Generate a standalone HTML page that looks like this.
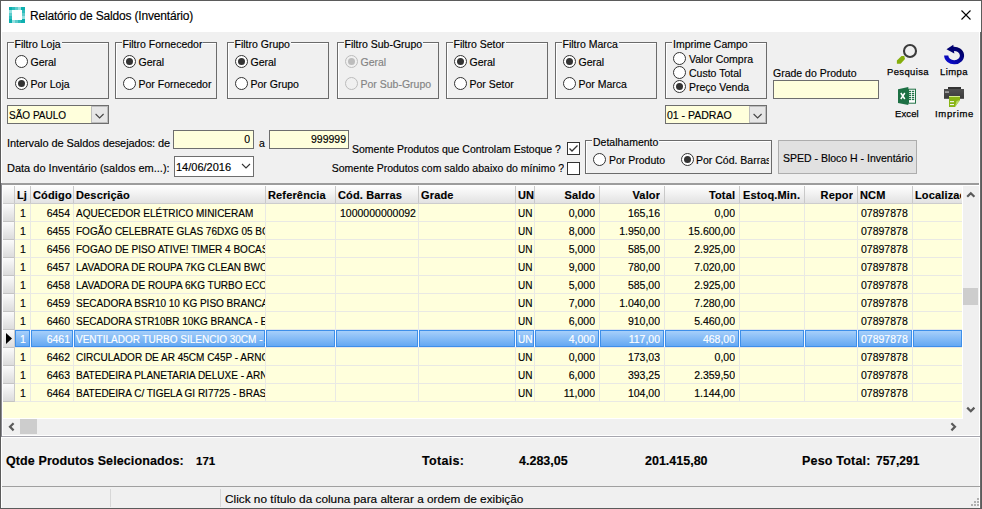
<!DOCTYPE html><html><head><meta charset="utf-8"><style>
html,body{margin:0;padding:0;}
body{width:982px;height:509px;position:relative;overflow:hidden;background:#f0f0f0;font-family:"Liberation Sans", sans-serif;}
.t{position:absolute;white-space:nowrap;line-height:12px;font-family:"Liberation Sans", sans-serif;-webkit-text-stroke:0.15px currentColor;}
</style></head><body>
<div style="position:absolute;left:0px;top:0px;width:982px;height:32px;background:#fff;"></div>
<svg style="position:absolute;left:9px;top:7px" width="16" height="16" viewBox="0 0 16 16" shape-rendering="crispEdges">
<rect x="0" y="0" width="16" height="16" fill="#0eafaf"/>
<rect x="3" y="3" width="10" height="10" fill="#fff"/>
<rect x="3" y="0" width="3" height="3" fill="#2ebcbc"/><rect x="6" y="0" width="3" height="3" fill="#5ccccc"/><rect x="9" y="0" width="3" height="3" fill="#93e0e0"/>
<rect x="13" y="3" width="3" height="3" fill="#2ebcbc"/><rect x="13" y="6" width="3" height="3" fill="#5ccccc"/><rect x="13" y="9" width="3" height="3" fill="#93e0e0"/>
<rect x="9" y="13" width="3" height="3" fill="#2ebcbc"/><rect x="6" y="13" width="3" height="3" fill="#5ccccc"/><rect x="3" y="13" width="3" height="3" fill="#93e0e0"/>
<rect x="0" y="9" width="3" height="3" fill="#2ebcbc"/><rect x="0" y="6" width="3" height="3" fill="#5ccccc"/><rect x="0" y="3" width="3" height="3" fill="#93e0e0"/>
</svg>
<div class="t" style="left:30px;top:8px;font-size:12px;font-weight:normal;color:#000;line-height:16px;letter-spacing:-0.18px">Relatório de Saldos (Inventário)</div>
<svg style="position:absolute;left:960px;top:9px" width="12" height="12"><path d="M1.5 1.5 L10.5 10.5 M10.5 1.5 L1.5 10.5" stroke="#000" stroke-width="1.1"/></svg>
<div style="position:absolute;left:7px;top:42px;width:102px;height:57px;box-sizing:border-box;border:1px solid #6b6b6b;box-shadow:inset 1px 1px 0 #fff;"></div>
<div class="t" style="left:13.5px;top:38px;padding:0 1px;background:#f0f0f0;font-size:10.5px;color:#000">Filtro Loja</div>
<div style="position:absolute;left:15px;top:55px;width:13px;height:13px;box-sizing:border-box;border:1px solid #333;border-radius:50%;background:#fff;"></div>
<div class="t" style="left:30.5px;top:54px;font-size:10.5px;font-weight:normal;color:#000;line-height:16px;">Geral</div>
<div style="position:absolute;left:15px;top:77px;width:13px;height:13px;box-sizing:border-box;border:1px solid #333;border-radius:50%;background:#fff;"></div>
<div style="position:absolute;left:18px;top:80px;width:7px;height:7px;border-radius:50%;background:#333;"></div>
<div class="t" style="left:30.5px;top:76px;font-size:10.5px;font-weight:normal;color:#000;line-height:16px;">Por Loja</div>
<div style="position:absolute;left:115px;top:42px;width:102px;height:57px;box-sizing:border-box;border:1px solid #6b6b6b;box-shadow:inset 1px 1px 0 #fff;"></div>
<div class="t" style="left:121.5px;top:38px;padding:0 1px;background:#f0f0f0;font-size:10.5px;color:#000">Filtro Fornecedor</div>
<div style="position:absolute;left:123px;top:55px;width:13px;height:13px;box-sizing:border-box;border:1px solid #333;border-radius:50%;background:#fff;"></div>
<div style="position:absolute;left:126px;top:58px;width:7px;height:7px;border-radius:50%;background:#333;"></div>
<div class="t" style="left:138.5px;top:54px;font-size:10.5px;font-weight:normal;color:#000;line-height:16px;">Geral</div>
<div style="position:absolute;left:123px;top:77px;width:13px;height:13px;box-sizing:border-box;border:1px solid #333;border-radius:50%;background:#fff;"></div>
<div class="t" style="left:138.5px;top:76px;font-size:10.5px;font-weight:normal;color:#000;line-height:16px;">Por Fornecedor</div>
<div style="position:absolute;left:227px;top:42px;width:102px;height:57px;box-sizing:border-box;border:1px solid #6b6b6b;box-shadow:inset 1px 1px 0 #fff;"></div>
<div class="t" style="left:233.5px;top:38px;padding:0 1px;background:#f0f0f0;font-size:10.5px;color:#000">Filtro Grupo</div>
<div style="position:absolute;left:235px;top:55px;width:13px;height:13px;box-sizing:border-box;border:1px solid #333;border-radius:50%;background:#fff;"></div>
<div style="position:absolute;left:238px;top:58px;width:7px;height:7px;border-radius:50%;background:#333;"></div>
<div class="t" style="left:250.5px;top:54px;font-size:10.5px;font-weight:normal;color:#000;line-height:16px;">Geral</div>
<div style="position:absolute;left:235px;top:77px;width:13px;height:13px;box-sizing:border-box;border:1px solid #333;border-radius:50%;background:#fff;"></div>
<div class="t" style="left:250.5px;top:76px;font-size:10.5px;font-weight:normal;color:#000;line-height:16px;">Por Grupo</div>
<div style="position:absolute;left:337px;top:42px;width:102px;height:57px;box-sizing:border-box;border:1px solid #6b6b6b;box-shadow:inset 1px 1px 0 #fff;"></div>
<div class="t" style="left:343.5px;top:38px;padding:0 1px;background:#f0f0f0;font-size:10.5px;color:#000">Filtro Sub-Grupo</div>
<div style="position:absolute;left:345px;top:55px;width:13px;height:13px;box-sizing:border-box;border:1px solid #bcbcbc;border-radius:50%;background:#f0f0f0;"></div>
<div style="position:absolute;left:348px;top:58px;width:7px;height:7px;border-radius:50%;background:#bcbcbc;"></div>
<div class="t" style="left:360.5px;top:54px;font-size:10.5px;font-weight:normal;color:#838383;line-height:16px;">Geral</div>
<div style="position:absolute;left:345px;top:77px;width:13px;height:13px;box-sizing:border-box;border:1px solid #bcbcbc;border-radius:50%;background:#f0f0f0;"></div>
<div class="t" style="left:360.5px;top:76px;font-size:10.5px;font-weight:normal;color:#838383;line-height:16px;">Por Sub-Grupo</div>
<div style="position:absolute;left:446px;top:42px;width:102px;height:57px;box-sizing:border-box;border:1px solid #6b6b6b;box-shadow:inset 1px 1px 0 #fff;"></div>
<div class="t" style="left:452.5px;top:38px;padding:0 1px;background:#f0f0f0;font-size:10.5px;color:#000">Filtro Setor</div>
<div style="position:absolute;left:454px;top:55px;width:13px;height:13px;box-sizing:border-box;border:1px solid #333;border-radius:50%;background:#fff;"></div>
<div style="position:absolute;left:457px;top:58px;width:7px;height:7px;border-radius:50%;background:#333;"></div>
<div class="t" style="left:469.5px;top:54px;font-size:10.5px;font-weight:normal;color:#000;line-height:16px;">Geral</div>
<div style="position:absolute;left:454px;top:77px;width:13px;height:13px;box-sizing:border-box;border:1px solid #333;border-radius:50%;background:#fff;"></div>
<div class="t" style="left:469.5px;top:76px;font-size:10.5px;font-weight:normal;color:#000;line-height:16px;">Por Setor</div>
<div style="position:absolute;left:555px;top:42px;width:102px;height:57px;box-sizing:border-box;border:1px solid #6b6b6b;box-shadow:inset 1px 1px 0 #fff;"></div>
<div class="t" style="left:561.5px;top:38px;padding:0 1px;background:#f0f0f0;font-size:10.5px;color:#000">Filtro Marca</div>
<div style="position:absolute;left:563px;top:55px;width:13px;height:13px;box-sizing:border-box;border:1px solid #333;border-radius:50%;background:#fff;"></div>
<div style="position:absolute;left:566px;top:58px;width:7px;height:7px;border-radius:50%;background:#333;"></div>
<div class="t" style="left:578.5px;top:54px;font-size:10.5px;font-weight:normal;color:#000;line-height:16px;">Geral</div>
<div style="position:absolute;left:563px;top:77px;width:13px;height:13px;box-sizing:border-box;border:1px solid #333;border-radius:50%;background:#fff;"></div>
<div class="t" style="left:578.5px;top:76px;font-size:10.5px;font-weight:normal;color:#000;line-height:16px;">Por Marca</div>
<div style="position:absolute;left:665px;top:42px;width:102px;height:57px;box-sizing:border-box;border:1px solid #6b6b6b;box-shadow:inset 1px 1px 0 #fff;"></div>
<div class="t" style="left:672px;top:38px;padding:0 1px;background:#f0f0f0;font-size:10.5px;color:#000">Imprime Campo</div>
<div style="position:absolute;left:673px;top:52px;width:13px;height:13px;box-sizing:border-box;border:1px solid #333;border-radius:50%;background:#fff;"></div>
<div class="t" style="left:689px;top:51px;font-size:10.5px;font-weight:normal;color:#000;line-height:16px;">Valor Compra</div>
<div style="position:absolute;left:673px;top:66px;width:13px;height:13px;box-sizing:border-box;border:1px solid #333;border-radius:50%;background:#fff;"></div>
<div class="t" style="left:689px;top:65px;font-size:10.5px;font-weight:normal;color:#000;line-height:16px;">Custo Total</div>
<div style="position:absolute;left:673px;top:80px;width:13px;height:13px;box-sizing:border-box;border:1px solid #333;border-radius:50%;background:#fff;"></div>
<div style="position:absolute;left:676px;top:83px;width:7px;height:7px;border-radius:50%;background:#333;"></div>
<div class="t" style="left:689px;top:79px;font-size:10.5px;font-weight:normal;color:#000;line-height:16px;">Preço Venda</div>
<div style="position:absolute;left:7px;top:105px;width:102px;height:19px;box-sizing:border-box;border:1px solid #6e6e6e;background:#ffffdc;"></div>
<div style="position:absolute;left:91px;top:106px;width:17px;height:17px;box-sizing:border-box;border:1px solid #bdbdbd;background:#e6e6e6;"></div>
<svg style="position:absolute;left:94px;top:113px" width="11" height="7"><path d="M1.6 1 L5.6 5 L9.6 1" fill="none" stroke="#444" stroke-width="1.1"/></svg>
<div class="t" style="left:9px;top:108px;font-size:10px;font-weight:normal;color:#000;line-height:16px;">SÃO PAULO</div>
<div style="position:absolute;left:665px;top:105px;width:102px;height:19px;box-sizing:border-box;border:1px solid #6e6e6e;background:#ffffdc;"></div>
<div style="position:absolute;left:749px;top:106px;width:17px;height:17px;box-sizing:border-box;border:1px solid #bdbdbd;background:#e6e6e6;"></div>
<svg style="position:absolute;left:752px;top:113px" width="11" height="7"><path d="M1.6 1 L5.6 5 L9.6 1" fill="none" stroke="#444" stroke-width="1.1"/></svg>
<div class="t" style="left:667px;top:107px;font-size:10.5px;font-weight:normal;color:#000;line-height:16px;">01 - PADRAO</div>
<div class="t" style="left:773px;top:65px;font-size:10.5px;font-weight:normal;color:#000;line-height:16px;">Grade do Produto</div>
<div style="position:absolute;left:773px;top:80px;width:106px;height:19px;box-sizing:border-box;border:1px solid #6e6e6e;background:#ffffdc;"></div>
<svg style="position:absolute;left:894px;top:42px" width="26" height="24" viewBox="0 0 26 24">
<circle cx="16" cy="9" r="6" fill="none" stroke="#3a3a3a" stroke-width="2.1"/>
<path d="M2.9 18.4 L7.5 14.1 L10.3 14.1 L11 16.9 L6.7 21.8 L2.9 21.8 Z" fill="#86ae0c"/>
</svg>
<div class="t" style="left:887px;top:64px;font-size:9.5px;font-weight:normal;color:#000;line-height:16px;letter-spacing:0.36px;-webkit-text-stroke:0.25px #000">Pesquisa</div>
<svg style="position:absolute;left:942px;top:43px" width="24" height="22" viewBox="0 0 24 22">
<defs><linearGradient id="lg1" x1="1" y1="0" x2="0" y2="1"><stop offset="0" stop-color="#00005a"/><stop offset="1" stop-color="#0c0cd4"/></linearGradient></defs>
<path d="M4.2 12.6 A 7.9 6.7 0 1 0 11.0 5.9" fill="none" stroke="url(#lg1)" stroke-width="4.2"/>
<path d="M4.5 6.3 L11.3 1.8 L12.3 10.4 Z" fill="#000070"/>
</svg>
<div class="t" style="left:940px;top:64px;font-size:9.5px;font-weight:normal;color:#000;line-height:16px;letter-spacing:0.42px;-webkit-text-stroke:0.25px #000">Limpa</div>
<svg style="position:absolute;left:897px;top:87px" width="20" height="18" viewBox="0 0 20 18">
<rect x="11.5" y="2.2" width="7" height="14" fill="#fff" stroke="#217346" stroke-width="1"/>
<g fill="#217346"><rect x="12" y="3.8" width="2.2" height="1.3"/><rect x="15" y="3.8" width="2.2" height="1.3"/>
<rect x="12" y="5.9" width="2.2" height="1.3"/><rect x="15" y="5.9" width="2.2" height="1.3"/>
<rect x="12" y="7.8" width="2.2" height="1.3"/><rect x="15" y="7.8" width="2.2" height="1.3"/>
<rect x="12" y="9.9" width="2.2" height="1.3"/><rect x="15" y="9.9" width="2.2" height="1.3"/>
<rect x="12" y="11.8" width="2.2" height="1.3"/><rect x="15" y="11.8" width="2.2" height="1.3"/></g>
<path d="M1 2.2 L11.3 0 L11.3 18 L1 15.9 Z" fill="#1d7044"/>
<path d="M3.8 6 L7.8 12 M7.8 6 L3.8 12" stroke="#fff" stroke-width="1.5"/>
</svg>
<div class="t" style="left:895px;top:106px;font-size:9.5px;font-weight:normal;color:#000;line-height:16px;letter-spacing:0.1px;-webkit-text-stroke:0.25px #000">Excel</div>
<svg style="position:absolute;left:943px;top:86px" width="22" height="22" viewBox="0 0 22 22">
<rect x="5" y="1" width="13" height="2.2" fill="#333"/>
<defs><linearGradient id="lg2" x1="0" y1="0" x2="0" y2="1"><stop offset="0" stop-color="#505050"/><stop offset="1" stop-color="#3a3a3a"/></linearGradient></defs>
<rect x="1" y="3" width="20" height="9.8" fill="url(#lg2)"/>
<rect x="2" y="5.2" width="4" height="1.8" fill="#9c9c9c"/>
<path d="M6 10 L17 10 L17 14 L12 21 L6 21 Z" fill="#88b414"/>
<rect x="6" y="10" width="11" height="1" fill="#d6ee8e"/>
<path d="M17 14 L13.5 15 L12 21 Z" fill="#b8d862"/>
<rect x="7" y="15.1" width="4" height="1.1" fill="#f4f4f4"/>
<rect x="7" y="18" width="4" height="1.1" fill="#f4f4f4"/>
</svg>
<div class="t" style="left:935px;top:106px;font-size:9.5px;font-weight:normal;color:#000;line-height:16px;letter-spacing:0.67px;-webkit-text-stroke:0.25px #000">Imprime</div>
<div class="t" style="left:7px;top:135px;font-size:11px;font-weight:normal;color:#000;line-height:16px;letter-spacing:-0.08px">Intervalo de Saldos desejados: de</div>
<div style="position:absolute;left:173px;top:130px;width:81px;height:19px;box-sizing:border-box;border:1px solid #6e6e6e;background:#ffffdc;"></div>
<div class="t" style="left:190px;width:60px;text-align:right;overflow:hidden;top:131px;font-size:10.5px;font-weight:normal;color:#000;line-height:16px;">0</div>
<div class="t" style="left:259px;top:135px;font-size:10.5px;font-weight:normal;color:#000;line-height:16px;">a</div>
<div style="position:absolute;left:269px;top:130px;width:80px;height:19px;box-sizing:border-box;border:1px solid #6e6e6e;background:#ffffdc;"></div>
<div class="t" style="left:276px;width:70px;text-align:right;overflow:hidden;top:131px;font-size:10.5px;font-weight:normal;color:#000;line-height:16px;">999999</div>
<div class="t" style="left:7px;top:160px;font-size:11px;font-weight:normal;color:#000;line-height:16px;">Data do Inventário (saldos em...):</div>
<div style="position:absolute;left:174px;top:156px;width:80px;height:21px;box-sizing:border-box;border:1px solid #6e6e6e;background:#fff;"></div>
<div class="t" style="left:176px;top:159px;font-size:11px;font-weight:normal;color:#000;line-height:16px;">14/06/2016</div>
<svg style="position:absolute;left:241px;top:163px" width="10" height="7"><path d="M1 1 L5 5 L9 1" fill="none" stroke="#333" stroke-width="1.1"/></svg>
<div class="t" style="left:352px;top:141px;font-size:10.5px;font-weight:normal;color:#000;line-height:16px;">Somente Produtos que Controlam Estoque ?</div>
<div style="position:absolute;left:567px;top:142px;width:13px;height:13px;box-sizing:border-box;border:1px solid #333;background:#fff;"></div>
<svg style="position:absolute;left:567px;top:142px" width="13" height="13"><path d="M2.5 6.5 L5 9 L10.5 3.5" fill="none" stroke="#333" stroke-width="1.3"/></svg>
<div class="t" style="left:324px;width:240px;text-align:right;overflow:hidden;top:160px;font-size:10.5px;font-weight:normal;color:#000;line-height:16px;">Somente Produtos com saldo abaixo do mínimo ?</div>
<div style="position:absolute;left:567px;top:162px;width:13px;height:13px;box-sizing:border-box;border:1px solid #333;background:#fff;"></div>
<div style="position:absolute;left:585px;top:140px;width:187px;height:34px;box-sizing:border-box;border:1px solid #6b6b6b;box-shadow:inset 1px 1px 0 #fff;"></div>
<div class="t" style="left:592px;top:136px;padding:0 1px;background:#f0f0f0;font-size:10.5px;color:#000">Detalhamento</div>
<div style="position:absolute;left:593px;top:153px;width:13px;height:13px;box-sizing:border-box;border:1px solid #333;border-radius:50%;background:#fff;"></div>
<div class="t" style="left:609px;top:152px;font-size:10.5px;font-weight:normal;color:#000;line-height:16px;">Por Produto</div>
<div style="position:absolute;left:681px;top:153px;width:13px;height:13px;box-sizing:border-box;border:1px solid #333;border-radius:50%;background:#fff;"></div>
<div style="position:absolute;left:684px;top:156px;width:7px;height:7px;border-radius:50%;background:#333;"></div>
<div class="t" style="left:696px;width:73px;overflow:hidden;top:152px;font-size:10.5px;font-weight:normal;color:#000;line-height:16px;">Por Cód. Barras</div>
<div style="position:absolute;left:778px;top:140px;width:139px;height:34px;box-sizing:border-box;border:1px solid #adadad;background:#e1e1e1;"></div>
<div class="t" style="left:783px;top:150px;font-size:10.5px;font-weight:normal;color:#000;line-height:16px;">SPED - Bloco H - Inventário</div>
<div style="position:absolute;left:1px;top:183px;width:980px;height:1px;background:#a0a0a0;"></div>
<div style="position:absolute;left:2px;top:183px;width:978px;height:2px;background:#9c9c9c;"></div>
<div style="position:absolute;left:2px;top:185px;width:960px;height:233px;background:#ffffdc;"></div>
<div style="position:absolute;left:2px;top:185px;width:960px;height:18px;background:linear-gradient(#ffffff 0%,#f4f4f4 40%,#e2e2e2 100%);"></div>
<div style="position:absolute;left:2px;top:203px;width:960px;height:1px;background:#cdcdcd;"></div>
<div style="position:absolute;left:14px;top:186px;width:1px;height:17px;background:#c9c9c9;"></div>
<div style="position:absolute;left:30px;top:186px;width:1px;height:17px;background:#c9c9c9;"></div>
<div style="position:absolute;left:73px;top:186px;width:1px;height:17px;background:#c9c9c9;"></div>
<div style="position:absolute;left:265px;top:186px;width:1px;height:17px;background:#c9c9c9;"></div>
<div style="position:absolute;left:335px;top:186px;width:1px;height:17px;background:#c9c9c9;"></div>
<div style="position:absolute;left:418px;top:186px;width:1px;height:17px;background:#c9c9c9;"></div>
<div style="position:absolute;left:515px;top:186px;width:1px;height:17px;background:#c9c9c9;"></div>
<div style="position:absolute;left:534px;top:186px;width:1px;height:17px;background:#c9c9c9;"></div>
<div style="position:absolute;left:599px;top:186px;width:1px;height:17px;background:#c9c9c9;"></div>
<div style="position:absolute;left:664px;top:186px;width:1px;height:17px;background:#c9c9c9;"></div>
<div style="position:absolute;left:739px;top:186px;width:1px;height:17px;background:#c9c9c9;"></div>
<div style="position:absolute;left:804px;top:186px;width:1px;height:17px;background:#c9c9c9;"></div>
<div style="position:absolute;left:857px;top:186px;width:1px;height:17px;background:#c9c9c9;"></div>
<div style="position:absolute;left:912px;top:186px;width:1px;height:17px;background:#c9c9c9;"></div>
<div class="t" style="left:17px;width:13px;overflow:hidden;top:187px;font-size:11px;font-weight:bold;color:#000;line-height:16px;letter-spacing:0.15px">Lj</div>
<div class="t" style="left:33px;width:40px;overflow:hidden;top:187px;font-size:11px;font-weight:bold;color:#000;line-height:16px;letter-spacing:0.15px">Código</div>
<div class="t" style="left:76px;width:189px;overflow:hidden;top:187px;font-size:11px;font-weight:bold;color:#000;line-height:16px;letter-spacing:0.15px">Descrição</div>
<div class="t" style="left:268px;width:67px;overflow:hidden;top:187px;font-size:11px;font-weight:bold;color:#000;line-height:16px;letter-spacing:0.15px">Referência</div>
<div class="t" style="left:338px;width:80px;overflow:hidden;top:187px;font-size:11px;font-weight:bold;color:#000;line-height:16px;letter-spacing:0.15px">Cód. Barras</div>
<div class="t" style="left:421px;width:94px;overflow:hidden;top:187px;font-size:11px;font-weight:bold;color:#000;line-height:16px;letter-spacing:0.15px">Grade</div>
<div class="t" style="left:518px;width:16px;overflow:hidden;top:187px;font-size:11px;font-weight:bold;color:#000;line-height:16px;letter-spacing:0.15px">UN</div>
<div class="t" style="left:743px;width:61px;overflow:hidden;top:187px;font-size:11px;font-weight:bold;color:#000;line-height:16px;letter-spacing:0.15px">Estoq.Min.</div>
<div class="t" style="left:860px;width:52px;overflow:hidden;top:187px;font-size:11px;font-weight:bold;color:#000;line-height:16px;letter-spacing:0.15px">NCM</div>
<div class="t" style="left:915px;width:46px;overflow:hidden;top:187px;font-size:11px;font-weight:bold;color:#000;line-height:16px;letter-spacing:0.15px">Localização</div>
<div class="t" style="left:535.15px;width:60px;text-align:right;overflow:hidden;top:187px;font-size:11px;font-weight:bold;color:#000;line-height:16px;letter-spacing:0.15px">Saldo</div>
<div class="t" style="left:600.15px;width:60px;text-align:right;overflow:hidden;top:187px;font-size:11px;font-weight:bold;color:#000;line-height:16px;letter-spacing:0.15px">Valor</div>
<div class="t" style="left:675.15px;width:60px;text-align:right;overflow:hidden;top:187px;font-size:11px;font-weight:bold;color:#000;line-height:16px;letter-spacing:0.15px">Total</div>
<div class="t" style="left:793.15px;width:60px;text-align:right;overflow:hidden;top:187px;font-size:11px;font-weight:bold;color:#000;line-height:16px;letter-spacing:0.15px">Repor</div>
<div style="position:absolute;left:3px;top:204px;width:11px;height:17px;background:linear-gradient(#fbfbfb,#dcdcdc);"></div>
<div style="position:absolute;left:3px;top:221px;width:11px;height:1px;background:#c4c4c4;"></div>
<div style="position:absolute;left:15px;top:221px;width:947px;height:1px;background:#e9e9e4;"></div>
<div style="position:absolute;left:30px;top:204px;width:1px;height:17px;background:#e9e9e4;"></div>
<div style="position:absolute;left:73px;top:204px;width:1px;height:17px;background:#e9e9e4;"></div>
<div style="position:absolute;left:265px;top:204px;width:1px;height:17px;background:#e9e9e4;"></div>
<div style="position:absolute;left:335px;top:204px;width:1px;height:17px;background:#e9e9e4;"></div>
<div style="position:absolute;left:418px;top:204px;width:1px;height:17px;background:#e9e9e4;"></div>
<div style="position:absolute;left:515px;top:204px;width:1px;height:17px;background:#e9e9e4;"></div>
<div style="position:absolute;left:534px;top:204px;width:1px;height:17px;background:#e9e9e4;"></div>
<div style="position:absolute;left:599px;top:204px;width:1px;height:17px;background:#e9e9e4;"></div>
<div style="position:absolute;left:664px;top:204px;width:1px;height:17px;background:#e9e9e4;"></div>
<div style="position:absolute;left:739px;top:204px;width:1px;height:17px;background:#e9e9e4;"></div>
<div style="position:absolute;left:804px;top:204px;width:1px;height:17px;background:#e9e9e4;"></div>
<div style="position:absolute;left:857px;top:204px;width:1px;height:17px;background:#e9e9e4;"></div>
<div style="position:absolute;left:912px;top:204px;width:1px;height:17px;background:#e9e9e4;"></div>
<div style="position:absolute;left:14px;top:204px;width:1px;height:18px;background:#c9c9c9;"></div>
<div class="t" style="left:20px;top:205px;font-size:10.5px;font-weight:normal;color:#000;line-height:16px;">1</div>
<div class="t" style="left:30px;width:40px;text-align:right;overflow:hidden;top:205px;font-size:10.5px;font-weight:normal;color:#000;line-height:16px;">6454</div>
<div class="t" style="left:76px;width:189px;overflow:hidden;top:206px;font-size:10px;font-weight:normal;color:#000;line-height:16px;">AQUECEDOR ELÉTRICO MINICERAM</div>
<div class="t" style="left:340px;width:78px;overflow:hidden;top:205px;font-size:10.5px;font-weight:normal;color:#000;line-height:16px;">1000000000092</div>
<div class="t" style="left:518px;top:206px;font-size:10px;font-weight:normal;color:#000;line-height:16px;">UN</div>
<div class="t" style="left:535px;width:60px;text-align:right;overflow:hidden;top:205px;font-size:10.5px;font-weight:normal;color:#000;line-height:16px;">0,000</div>
<div class="t" style="left:600px;width:60px;text-align:right;overflow:hidden;top:205px;font-size:10.5px;font-weight:normal;color:#000;line-height:16px;">165,16</div>
<div class="t" style="left:665px;width:70px;text-align:right;overflow:hidden;top:205px;font-size:10.5px;font-weight:normal;color:#000;line-height:16px;">0,00</div>
<div class="t" style="left:861px;top:205px;font-size:10.5px;font-weight:normal;color:#000;line-height:16px;">07897878</div>
<div style="position:absolute;left:3px;top:222px;width:11px;height:17px;background:linear-gradient(#fbfbfb,#dcdcdc);"></div>
<div style="position:absolute;left:3px;top:239px;width:11px;height:1px;background:#c4c4c4;"></div>
<div style="position:absolute;left:15px;top:239px;width:947px;height:1px;background:#e9e9e4;"></div>
<div style="position:absolute;left:30px;top:222px;width:1px;height:17px;background:#e9e9e4;"></div>
<div style="position:absolute;left:73px;top:222px;width:1px;height:17px;background:#e9e9e4;"></div>
<div style="position:absolute;left:265px;top:222px;width:1px;height:17px;background:#e9e9e4;"></div>
<div style="position:absolute;left:335px;top:222px;width:1px;height:17px;background:#e9e9e4;"></div>
<div style="position:absolute;left:418px;top:222px;width:1px;height:17px;background:#e9e9e4;"></div>
<div style="position:absolute;left:515px;top:222px;width:1px;height:17px;background:#e9e9e4;"></div>
<div style="position:absolute;left:534px;top:222px;width:1px;height:17px;background:#e9e9e4;"></div>
<div style="position:absolute;left:599px;top:222px;width:1px;height:17px;background:#e9e9e4;"></div>
<div style="position:absolute;left:664px;top:222px;width:1px;height:17px;background:#e9e9e4;"></div>
<div style="position:absolute;left:739px;top:222px;width:1px;height:17px;background:#e9e9e4;"></div>
<div style="position:absolute;left:804px;top:222px;width:1px;height:17px;background:#e9e9e4;"></div>
<div style="position:absolute;left:857px;top:222px;width:1px;height:17px;background:#e9e9e4;"></div>
<div style="position:absolute;left:912px;top:222px;width:1px;height:17px;background:#e9e9e4;"></div>
<div style="position:absolute;left:14px;top:222px;width:1px;height:18px;background:#c9c9c9;"></div>
<div class="t" style="left:20px;top:223px;font-size:10.5px;font-weight:normal;color:#000;line-height:16px;">1</div>
<div class="t" style="left:30px;width:40px;text-align:right;overflow:hidden;top:223px;font-size:10.5px;font-weight:normal;color:#000;line-height:16px;">6455</div>
<div class="t" style="left:76px;width:189px;overflow:hidden;top:224px;font-size:10px;font-weight:normal;color:#000;line-height:16px;">FOGÃO CELEBRATE GLAS 76DXG 05 BCA</div>
<div class="t" style="left:340px;width:78px;overflow:hidden;top:223px;font-size:10.5px;font-weight:normal;color:#000;line-height:16px;"></div>
<div class="t" style="left:518px;top:224px;font-size:10px;font-weight:normal;color:#000;line-height:16px;">UN</div>
<div class="t" style="left:535px;width:60px;text-align:right;overflow:hidden;top:223px;font-size:10.5px;font-weight:normal;color:#000;line-height:16px;">8,000</div>
<div class="t" style="left:600px;width:60px;text-align:right;overflow:hidden;top:223px;font-size:10.5px;font-weight:normal;color:#000;line-height:16px;">1.950,00</div>
<div class="t" style="left:665px;width:70px;text-align:right;overflow:hidden;top:223px;font-size:10.5px;font-weight:normal;color:#000;line-height:16px;">15.600,00</div>
<div class="t" style="left:861px;top:223px;font-size:10.5px;font-weight:normal;color:#000;line-height:16px;">07897878</div>
<div style="position:absolute;left:3px;top:240px;width:11px;height:17px;background:linear-gradient(#fbfbfb,#dcdcdc);"></div>
<div style="position:absolute;left:3px;top:257px;width:11px;height:1px;background:#c4c4c4;"></div>
<div style="position:absolute;left:15px;top:257px;width:947px;height:1px;background:#e9e9e4;"></div>
<div style="position:absolute;left:30px;top:240px;width:1px;height:17px;background:#e9e9e4;"></div>
<div style="position:absolute;left:73px;top:240px;width:1px;height:17px;background:#e9e9e4;"></div>
<div style="position:absolute;left:265px;top:240px;width:1px;height:17px;background:#e9e9e4;"></div>
<div style="position:absolute;left:335px;top:240px;width:1px;height:17px;background:#e9e9e4;"></div>
<div style="position:absolute;left:418px;top:240px;width:1px;height:17px;background:#e9e9e4;"></div>
<div style="position:absolute;left:515px;top:240px;width:1px;height:17px;background:#e9e9e4;"></div>
<div style="position:absolute;left:534px;top:240px;width:1px;height:17px;background:#e9e9e4;"></div>
<div style="position:absolute;left:599px;top:240px;width:1px;height:17px;background:#e9e9e4;"></div>
<div style="position:absolute;left:664px;top:240px;width:1px;height:17px;background:#e9e9e4;"></div>
<div style="position:absolute;left:739px;top:240px;width:1px;height:17px;background:#e9e9e4;"></div>
<div style="position:absolute;left:804px;top:240px;width:1px;height:17px;background:#e9e9e4;"></div>
<div style="position:absolute;left:857px;top:240px;width:1px;height:17px;background:#e9e9e4;"></div>
<div style="position:absolute;left:912px;top:240px;width:1px;height:17px;background:#e9e9e4;"></div>
<div style="position:absolute;left:14px;top:240px;width:1px;height:18px;background:#c9c9c9;"></div>
<div class="t" style="left:20px;top:241px;font-size:10.5px;font-weight:normal;color:#000;line-height:16px;">1</div>
<div class="t" style="left:30px;width:40px;text-align:right;overflow:hidden;top:241px;font-size:10.5px;font-weight:normal;color:#000;line-height:16px;">6456</div>
<div class="t" style="left:76px;width:189px;overflow:hidden;top:242px;font-size:10px;font-weight:normal;color:#000;line-height:16px;">FOGAO DE PISO ATIVE! TIMER 4 BOCAS</div>
<div class="t" style="left:340px;width:78px;overflow:hidden;top:241px;font-size:10.5px;font-weight:normal;color:#000;line-height:16px;"></div>
<div class="t" style="left:518px;top:242px;font-size:10px;font-weight:normal;color:#000;line-height:16px;">UN</div>
<div class="t" style="left:535px;width:60px;text-align:right;overflow:hidden;top:241px;font-size:10.5px;font-weight:normal;color:#000;line-height:16px;">5,000</div>
<div class="t" style="left:600px;width:60px;text-align:right;overflow:hidden;top:241px;font-size:10.5px;font-weight:normal;color:#000;line-height:16px;">585,00</div>
<div class="t" style="left:665px;width:70px;text-align:right;overflow:hidden;top:241px;font-size:10.5px;font-weight:normal;color:#000;line-height:16px;">2.925,00</div>
<div class="t" style="left:861px;top:241px;font-size:10.5px;font-weight:normal;color:#000;line-height:16px;">07897878</div>
<div style="position:absolute;left:3px;top:258px;width:11px;height:17px;background:linear-gradient(#fbfbfb,#dcdcdc);"></div>
<div style="position:absolute;left:3px;top:275px;width:11px;height:1px;background:#c4c4c4;"></div>
<div style="position:absolute;left:15px;top:275px;width:947px;height:1px;background:#e9e9e4;"></div>
<div style="position:absolute;left:30px;top:258px;width:1px;height:17px;background:#e9e9e4;"></div>
<div style="position:absolute;left:73px;top:258px;width:1px;height:17px;background:#e9e9e4;"></div>
<div style="position:absolute;left:265px;top:258px;width:1px;height:17px;background:#e9e9e4;"></div>
<div style="position:absolute;left:335px;top:258px;width:1px;height:17px;background:#e9e9e4;"></div>
<div style="position:absolute;left:418px;top:258px;width:1px;height:17px;background:#e9e9e4;"></div>
<div style="position:absolute;left:515px;top:258px;width:1px;height:17px;background:#e9e9e4;"></div>
<div style="position:absolute;left:534px;top:258px;width:1px;height:17px;background:#e9e9e4;"></div>
<div style="position:absolute;left:599px;top:258px;width:1px;height:17px;background:#e9e9e4;"></div>
<div style="position:absolute;left:664px;top:258px;width:1px;height:17px;background:#e9e9e4;"></div>
<div style="position:absolute;left:739px;top:258px;width:1px;height:17px;background:#e9e9e4;"></div>
<div style="position:absolute;left:804px;top:258px;width:1px;height:17px;background:#e9e9e4;"></div>
<div style="position:absolute;left:857px;top:258px;width:1px;height:17px;background:#e9e9e4;"></div>
<div style="position:absolute;left:912px;top:258px;width:1px;height:17px;background:#e9e9e4;"></div>
<div style="position:absolute;left:14px;top:258px;width:1px;height:18px;background:#c9c9c9;"></div>
<div class="t" style="left:20px;top:259px;font-size:10.5px;font-weight:normal;color:#000;line-height:16px;">1</div>
<div class="t" style="left:30px;width:40px;text-align:right;overflow:hidden;top:259px;font-size:10.5px;font-weight:normal;color:#000;line-height:16px;">6457</div>
<div class="t" style="left:76px;width:189px;overflow:hidden;top:260px;font-size:10px;font-weight:normal;color:#000;line-height:16px;">LAVADORA DE ROUPA 7KG CLEAN BWC07</div>
<div class="t" style="left:340px;width:78px;overflow:hidden;top:259px;font-size:10.5px;font-weight:normal;color:#000;line-height:16px;"></div>
<div class="t" style="left:518px;top:260px;font-size:10px;font-weight:normal;color:#000;line-height:16px;">UN</div>
<div class="t" style="left:535px;width:60px;text-align:right;overflow:hidden;top:259px;font-size:10.5px;font-weight:normal;color:#000;line-height:16px;">9,000</div>
<div class="t" style="left:600px;width:60px;text-align:right;overflow:hidden;top:259px;font-size:10.5px;font-weight:normal;color:#000;line-height:16px;">780,00</div>
<div class="t" style="left:665px;width:70px;text-align:right;overflow:hidden;top:259px;font-size:10.5px;font-weight:normal;color:#000;line-height:16px;">7.020,00</div>
<div class="t" style="left:861px;top:259px;font-size:10.5px;font-weight:normal;color:#000;line-height:16px;">07897878</div>
<div style="position:absolute;left:3px;top:276px;width:11px;height:17px;background:linear-gradient(#fbfbfb,#dcdcdc);"></div>
<div style="position:absolute;left:3px;top:293px;width:11px;height:1px;background:#c4c4c4;"></div>
<div style="position:absolute;left:15px;top:293px;width:947px;height:1px;background:#e9e9e4;"></div>
<div style="position:absolute;left:30px;top:276px;width:1px;height:17px;background:#e9e9e4;"></div>
<div style="position:absolute;left:73px;top:276px;width:1px;height:17px;background:#e9e9e4;"></div>
<div style="position:absolute;left:265px;top:276px;width:1px;height:17px;background:#e9e9e4;"></div>
<div style="position:absolute;left:335px;top:276px;width:1px;height:17px;background:#e9e9e4;"></div>
<div style="position:absolute;left:418px;top:276px;width:1px;height:17px;background:#e9e9e4;"></div>
<div style="position:absolute;left:515px;top:276px;width:1px;height:17px;background:#e9e9e4;"></div>
<div style="position:absolute;left:534px;top:276px;width:1px;height:17px;background:#e9e9e4;"></div>
<div style="position:absolute;left:599px;top:276px;width:1px;height:17px;background:#e9e9e4;"></div>
<div style="position:absolute;left:664px;top:276px;width:1px;height:17px;background:#e9e9e4;"></div>
<div style="position:absolute;left:739px;top:276px;width:1px;height:17px;background:#e9e9e4;"></div>
<div style="position:absolute;left:804px;top:276px;width:1px;height:17px;background:#e9e9e4;"></div>
<div style="position:absolute;left:857px;top:276px;width:1px;height:17px;background:#e9e9e4;"></div>
<div style="position:absolute;left:912px;top:276px;width:1px;height:17px;background:#e9e9e4;"></div>
<div style="position:absolute;left:14px;top:276px;width:1px;height:18px;background:#c9c9c9;"></div>
<div class="t" style="left:20px;top:277px;font-size:10.5px;font-weight:normal;color:#000;line-height:16px;">1</div>
<div class="t" style="left:30px;width:40px;text-align:right;overflow:hidden;top:277px;font-size:10.5px;font-weight:normal;color:#000;line-height:16px;">6458</div>
<div class="t" style="left:76px;width:189px;overflow:hidden;top:278px;font-size:10px;font-weight:normal;color:#000;line-height:16px;">LAVADORA DE ROUPA 6KG TURBO ECO</div>
<div class="t" style="left:340px;width:78px;overflow:hidden;top:277px;font-size:10.5px;font-weight:normal;color:#000;line-height:16px;"></div>
<div class="t" style="left:518px;top:278px;font-size:10px;font-weight:normal;color:#000;line-height:16px;">UN</div>
<div class="t" style="left:535px;width:60px;text-align:right;overflow:hidden;top:277px;font-size:10.5px;font-weight:normal;color:#000;line-height:16px;">5,000</div>
<div class="t" style="left:600px;width:60px;text-align:right;overflow:hidden;top:277px;font-size:10.5px;font-weight:normal;color:#000;line-height:16px;">585,00</div>
<div class="t" style="left:665px;width:70px;text-align:right;overflow:hidden;top:277px;font-size:10.5px;font-weight:normal;color:#000;line-height:16px;">2.925,00</div>
<div class="t" style="left:861px;top:277px;font-size:10.5px;font-weight:normal;color:#000;line-height:16px;">07897878</div>
<div style="position:absolute;left:3px;top:294px;width:11px;height:17px;background:linear-gradient(#fbfbfb,#dcdcdc);"></div>
<div style="position:absolute;left:3px;top:311px;width:11px;height:1px;background:#c4c4c4;"></div>
<div style="position:absolute;left:15px;top:311px;width:947px;height:1px;background:#e9e9e4;"></div>
<div style="position:absolute;left:30px;top:294px;width:1px;height:17px;background:#e9e9e4;"></div>
<div style="position:absolute;left:73px;top:294px;width:1px;height:17px;background:#e9e9e4;"></div>
<div style="position:absolute;left:265px;top:294px;width:1px;height:17px;background:#e9e9e4;"></div>
<div style="position:absolute;left:335px;top:294px;width:1px;height:17px;background:#e9e9e4;"></div>
<div style="position:absolute;left:418px;top:294px;width:1px;height:17px;background:#e9e9e4;"></div>
<div style="position:absolute;left:515px;top:294px;width:1px;height:17px;background:#e9e9e4;"></div>
<div style="position:absolute;left:534px;top:294px;width:1px;height:17px;background:#e9e9e4;"></div>
<div style="position:absolute;left:599px;top:294px;width:1px;height:17px;background:#e9e9e4;"></div>
<div style="position:absolute;left:664px;top:294px;width:1px;height:17px;background:#e9e9e4;"></div>
<div style="position:absolute;left:739px;top:294px;width:1px;height:17px;background:#e9e9e4;"></div>
<div style="position:absolute;left:804px;top:294px;width:1px;height:17px;background:#e9e9e4;"></div>
<div style="position:absolute;left:857px;top:294px;width:1px;height:17px;background:#e9e9e4;"></div>
<div style="position:absolute;left:912px;top:294px;width:1px;height:17px;background:#e9e9e4;"></div>
<div style="position:absolute;left:14px;top:294px;width:1px;height:18px;background:#c9c9c9;"></div>
<div class="t" style="left:20px;top:295px;font-size:10.5px;font-weight:normal;color:#000;line-height:16px;">1</div>
<div class="t" style="left:30px;width:40px;text-align:right;overflow:hidden;top:295px;font-size:10.5px;font-weight:normal;color:#000;line-height:16px;">6459</div>
<div class="t" style="left:76px;width:189px;overflow:hidden;top:296px;font-size:10px;font-weight:normal;color:#000;line-height:16px;">SECADORA BSR10 10 KG PISO BRANCA</div>
<div class="t" style="left:340px;width:78px;overflow:hidden;top:295px;font-size:10.5px;font-weight:normal;color:#000;line-height:16px;"></div>
<div class="t" style="left:518px;top:296px;font-size:10px;font-weight:normal;color:#000;line-height:16px;">UN</div>
<div class="t" style="left:535px;width:60px;text-align:right;overflow:hidden;top:295px;font-size:10.5px;font-weight:normal;color:#000;line-height:16px;">7,000</div>
<div class="t" style="left:600px;width:60px;text-align:right;overflow:hidden;top:295px;font-size:10.5px;font-weight:normal;color:#000;line-height:16px;">1.040,00</div>
<div class="t" style="left:665px;width:70px;text-align:right;overflow:hidden;top:295px;font-size:10.5px;font-weight:normal;color:#000;line-height:16px;">7.280,00</div>
<div class="t" style="left:861px;top:295px;font-size:10.5px;font-weight:normal;color:#000;line-height:16px;">07897878</div>
<div style="position:absolute;left:3px;top:312px;width:11px;height:17px;background:linear-gradient(#fbfbfb,#dcdcdc);"></div>
<div style="position:absolute;left:3px;top:329px;width:11px;height:1px;background:#c4c4c4;"></div>
<div style="position:absolute;left:15px;top:329px;width:947px;height:1px;background:#e9e9e4;"></div>
<div style="position:absolute;left:30px;top:312px;width:1px;height:17px;background:#e9e9e4;"></div>
<div style="position:absolute;left:73px;top:312px;width:1px;height:17px;background:#e9e9e4;"></div>
<div style="position:absolute;left:265px;top:312px;width:1px;height:17px;background:#e9e9e4;"></div>
<div style="position:absolute;left:335px;top:312px;width:1px;height:17px;background:#e9e9e4;"></div>
<div style="position:absolute;left:418px;top:312px;width:1px;height:17px;background:#e9e9e4;"></div>
<div style="position:absolute;left:515px;top:312px;width:1px;height:17px;background:#e9e9e4;"></div>
<div style="position:absolute;left:534px;top:312px;width:1px;height:17px;background:#e9e9e4;"></div>
<div style="position:absolute;left:599px;top:312px;width:1px;height:17px;background:#e9e9e4;"></div>
<div style="position:absolute;left:664px;top:312px;width:1px;height:17px;background:#e9e9e4;"></div>
<div style="position:absolute;left:739px;top:312px;width:1px;height:17px;background:#e9e9e4;"></div>
<div style="position:absolute;left:804px;top:312px;width:1px;height:17px;background:#e9e9e4;"></div>
<div style="position:absolute;left:857px;top:312px;width:1px;height:17px;background:#e9e9e4;"></div>
<div style="position:absolute;left:912px;top:312px;width:1px;height:17px;background:#e9e9e4;"></div>
<div style="position:absolute;left:14px;top:312px;width:1px;height:18px;background:#c9c9c9;"></div>
<div class="t" style="left:20px;top:313px;font-size:10.5px;font-weight:normal;color:#000;line-height:16px;">1</div>
<div class="t" style="left:30px;width:40px;text-align:right;overflow:hidden;top:313px;font-size:10.5px;font-weight:normal;color:#000;line-height:16px;">6460</div>
<div class="t" style="left:76px;width:189px;overflow:hidden;top:314px;font-size:10px;font-weight:normal;color:#000;line-height:16px;">SECADORA STR10BR 10KG BRANCA - ELETROLUX</div>
<div class="t" style="left:340px;width:78px;overflow:hidden;top:313px;font-size:10.5px;font-weight:normal;color:#000;line-height:16px;"></div>
<div class="t" style="left:518px;top:314px;font-size:10px;font-weight:normal;color:#000;line-height:16px;">UN</div>
<div class="t" style="left:535px;width:60px;text-align:right;overflow:hidden;top:313px;font-size:10.5px;font-weight:normal;color:#000;line-height:16px;">6,000</div>
<div class="t" style="left:600px;width:60px;text-align:right;overflow:hidden;top:313px;font-size:10.5px;font-weight:normal;color:#000;line-height:16px;">910,00</div>
<div class="t" style="left:665px;width:70px;text-align:right;overflow:hidden;top:313px;font-size:10.5px;font-weight:normal;color:#000;line-height:16px;">5.460,00</div>
<div class="t" style="left:861px;top:313px;font-size:10.5px;font-weight:normal;color:#000;line-height:16px;">07897878</div>
<div style="position:absolute;left:3px;top:330px;width:11px;height:17px;background:linear-gradient(#fbfbfb,#dcdcdc);"></div>
<div style="position:absolute;left:3px;top:347px;width:11px;height:1px;background:#c4c4c4;"></div>
<div style="position:absolute;left:15px;top:347px;width:947px;height:1px;background:#e9e9e4;"></div>
<div style="position:absolute;left:30px;top:330px;width:1px;height:17px;background:#e9e9e4;"></div>
<div style="position:absolute;left:73px;top:330px;width:1px;height:17px;background:#e9e9e4;"></div>
<div style="position:absolute;left:265px;top:330px;width:1px;height:17px;background:#e9e9e4;"></div>
<div style="position:absolute;left:335px;top:330px;width:1px;height:17px;background:#e9e9e4;"></div>
<div style="position:absolute;left:418px;top:330px;width:1px;height:17px;background:#e9e9e4;"></div>
<div style="position:absolute;left:515px;top:330px;width:1px;height:17px;background:#e9e9e4;"></div>
<div style="position:absolute;left:534px;top:330px;width:1px;height:17px;background:#e9e9e4;"></div>
<div style="position:absolute;left:599px;top:330px;width:1px;height:17px;background:#e9e9e4;"></div>
<div style="position:absolute;left:664px;top:330px;width:1px;height:17px;background:#e9e9e4;"></div>
<div style="position:absolute;left:739px;top:330px;width:1px;height:17px;background:#e9e9e4;"></div>
<div style="position:absolute;left:804px;top:330px;width:1px;height:17px;background:#e9e9e4;"></div>
<div style="position:absolute;left:857px;top:330px;width:1px;height:17px;background:#e9e9e4;"></div>
<div style="position:absolute;left:912px;top:330px;width:1px;height:17px;background:#e9e9e4;"></div>
<div style="position:absolute;left:15px;top:330px;width:15px;height:17px;box-sizing:border-box;border:1px solid #3d8fea;background:linear-gradient(#a6cffa,#64a8f3);"></div>
<div style="position:absolute;left:31px;top:330px;width:42px;height:17px;box-sizing:border-box;border:1px solid #3d8fea;background:linear-gradient(#a6cffa,#64a8f3);"></div>
<div style="position:absolute;left:74px;top:330px;width:191px;height:17px;box-sizing:border-box;border:1px solid #3d8fea;background:linear-gradient(#a6cffa,#64a8f3);"></div>
<div style="position:absolute;left:266px;top:330px;width:69px;height:17px;box-sizing:border-box;border:1px solid #3d8fea;background:linear-gradient(#a6cffa,#64a8f3);"></div>
<div style="position:absolute;left:336px;top:330px;width:82px;height:17px;box-sizing:border-box;border:1px solid #3d8fea;background:linear-gradient(#a6cffa,#64a8f3);"></div>
<div style="position:absolute;left:419px;top:330px;width:96px;height:17px;box-sizing:border-box;border:1px solid #3d8fea;background:linear-gradient(#a6cffa,#64a8f3);"></div>
<div style="position:absolute;left:516px;top:330px;width:18px;height:17px;box-sizing:border-box;border:1px solid #3d8fea;background:linear-gradient(#a6cffa,#64a8f3);"></div>
<div style="position:absolute;left:535px;top:330px;width:64px;height:17px;box-sizing:border-box;border:1px solid #3d8fea;background:linear-gradient(#a6cffa,#64a8f3);"></div>
<div style="position:absolute;left:600px;top:330px;width:64px;height:17px;box-sizing:border-box;border:1px solid #3d8fea;background:linear-gradient(#a6cffa,#64a8f3);"></div>
<div style="position:absolute;left:665px;top:330px;width:74px;height:17px;box-sizing:border-box;border:1px solid #3d8fea;background:linear-gradient(#a6cffa,#64a8f3);"></div>
<div style="position:absolute;left:740px;top:330px;width:64px;height:17px;box-sizing:border-box;border:1px solid #3d8fea;background:linear-gradient(#a6cffa,#64a8f3);"></div>
<div style="position:absolute;left:805px;top:330px;width:52px;height:17px;box-sizing:border-box;border:1px solid #3d8fea;background:linear-gradient(#a6cffa,#64a8f3);"></div>
<div style="position:absolute;left:858px;top:330px;width:54px;height:17px;box-sizing:border-box;border:1px solid #3d8fea;background:linear-gradient(#a6cffa,#64a8f3);"></div>
<div style="position:absolute;left:913px;top:330px;width:49px;height:17px;box-sizing:border-box;border:1px solid #3d8fea;background:linear-gradient(#a6cffa,#64a8f3);"></div>
<div style="position:absolute;left:30px;top:330px;width:1px;height:17px;background:#f4f8ff;"></div>
<div style="position:absolute;left:73px;top:330px;width:1px;height:17px;background:#f4f8ff;"></div>
<div style="position:absolute;left:265px;top:330px;width:1px;height:17px;background:#f4f8ff;"></div>
<div style="position:absolute;left:335px;top:330px;width:1px;height:17px;background:#f4f8ff;"></div>
<div style="position:absolute;left:418px;top:330px;width:1px;height:17px;background:#f4f8ff;"></div>
<div style="position:absolute;left:515px;top:330px;width:1px;height:17px;background:#f4f8ff;"></div>
<div style="position:absolute;left:534px;top:330px;width:1px;height:17px;background:#f4f8ff;"></div>
<div style="position:absolute;left:599px;top:330px;width:1px;height:17px;background:#f4f8ff;"></div>
<div style="position:absolute;left:664px;top:330px;width:1px;height:17px;background:#f4f8ff;"></div>
<div style="position:absolute;left:739px;top:330px;width:1px;height:17px;background:#f4f8ff;"></div>
<div style="position:absolute;left:804px;top:330px;width:1px;height:17px;background:#f4f8ff;"></div>
<div style="position:absolute;left:857px;top:330px;width:1px;height:17px;background:#f4f8ff;"></div>
<div style="position:absolute;left:912px;top:330px;width:1px;height:17px;background:#f4f8ff;"></div>
<svg style="position:absolute;left:6px;top:333px" width="7" height="12"><path d="M0 0 L6 5.5 L0 11 Z" fill="#000"/></svg>
<div style="position:absolute;left:14px;top:330px;width:1px;height:18px;background:#c9c9c9;"></div>
<div class="t" style="left:20px;top:331px;font-size:10.5px;font-weight:normal;color:#fff;line-height:16px;">1</div>
<div class="t" style="left:30px;width:40px;text-align:right;overflow:hidden;top:331px;font-size:10.5px;font-weight:normal;color:#fff;line-height:16px;">6461</div>
<div class="t" style="left:76px;width:189px;overflow:hidden;top:332px;font-size:10px;font-weight:normal;color:#fff;line-height:16px;">VENTILADOR TURBO SILENCIO 30CM - ARNO</div>
<div class="t" style="left:340px;width:78px;overflow:hidden;top:331px;font-size:10.5px;font-weight:normal;color:#fff;line-height:16px;"></div>
<div class="t" style="left:518px;top:332px;font-size:10px;font-weight:normal;color:#fff;line-height:16px;">UN</div>
<div class="t" style="left:535px;width:60px;text-align:right;overflow:hidden;top:331px;font-size:10.5px;font-weight:normal;color:#fff;line-height:16px;">4,000</div>
<div class="t" style="left:600px;width:60px;text-align:right;overflow:hidden;top:331px;font-size:10.5px;font-weight:normal;color:#fff;line-height:16px;">117,00</div>
<div class="t" style="left:665px;width:70px;text-align:right;overflow:hidden;top:331px;font-size:10.5px;font-weight:normal;color:#fff;line-height:16px;">468,00</div>
<div class="t" style="left:861px;top:331px;font-size:10.5px;font-weight:normal;color:#fff;line-height:16px;">07897878</div>
<div style="position:absolute;left:3px;top:348px;width:11px;height:17px;background:linear-gradient(#fbfbfb,#dcdcdc);"></div>
<div style="position:absolute;left:3px;top:365px;width:11px;height:1px;background:#c4c4c4;"></div>
<div style="position:absolute;left:15px;top:365px;width:947px;height:1px;background:#e9e9e4;"></div>
<div style="position:absolute;left:30px;top:348px;width:1px;height:17px;background:#e9e9e4;"></div>
<div style="position:absolute;left:73px;top:348px;width:1px;height:17px;background:#e9e9e4;"></div>
<div style="position:absolute;left:265px;top:348px;width:1px;height:17px;background:#e9e9e4;"></div>
<div style="position:absolute;left:335px;top:348px;width:1px;height:17px;background:#e9e9e4;"></div>
<div style="position:absolute;left:418px;top:348px;width:1px;height:17px;background:#e9e9e4;"></div>
<div style="position:absolute;left:515px;top:348px;width:1px;height:17px;background:#e9e9e4;"></div>
<div style="position:absolute;left:534px;top:348px;width:1px;height:17px;background:#e9e9e4;"></div>
<div style="position:absolute;left:599px;top:348px;width:1px;height:17px;background:#e9e9e4;"></div>
<div style="position:absolute;left:664px;top:348px;width:1px;height:17px;background:#e9e9e4;"></div>
<div style="position:absolute;left:739px;top:348px;width:1px;height:17px;background:#e9e9e4;"></div>
<div style="position:absolute;left:804px;top:348px;width:1px;height:17px;background:#e9e9e4;"></div>
<div style="position:absolute;left:857px;top:348px;width:1px;height:17px;background:#e9e9e4;"></div>
<div style="position:absolute;left:912px;top:348px;width:1px;height:17px;background:#e9e9e4;"></div>
<div style="position:absolute;left:14px;top:348px;width:1px;height:18px;background:#c9c9c9;"></div>
<div class="t" style="left:20px;top:349px;font-size:10.5px;font-weight:normal;color:#000;line-height:16px;">1</div>
<div class="t" style="left:30px;width:40px;text-align:right;overflow:hidden;top:349px;font-size:10.5px;font-weight:normal;color:#000;line-height:16px;">6462</div>
<div class="t" style="left:76px;width:189px;overflow:hidden;top:350px;font-size:10px;font-weight:normal;color:#000;line-height:16px;">CIRCULADOR DE AR 45CM C45P - ARNO</div>
<div class="t" style="left:340px;width:78px;overflow:hidden;top:349px;font-size:10.5px;font-weight:normal;color:#000;line-height:16px;"></div>
<div class="t" style="left:518px;top:350px;font-size:10px;font-weight:normal;color:#000;line-height:16px;">UN</div>
<div class="t" style="left:535px;width:60px;text-align:right;overflow:hidden;top:349px;font-size:10.5px;font-weight:normal;color:#000;line-height:16px;">0,000</div>
<div class="t" style="left:600px;width:60px;text-align:right;overflow:hidden;top:349px;font-size:10.5px;font-weight:normal;color:#000;line-height:16px;">173,03</div>
<div class="t" style="left:665px;width:70px;text-align:right;overflow:hidden;top:349px;font-size:10.5px;font-weight:normal;color:#000;line-height:16px;">0,00</div>
<div class="t" style="left:861px;top:349px;font-size:10.5px;font-weight:normal;color:#000;line-height:16px;">07897878</div>
<div style="position:absolute;left:3px;top:366px;width:11px;height:17px;background:linear-gradient(#fbfbfb,#dcdcdc);"></div>
<div style="position:absolute;left:3px;top:383px;width:11px;height:1px;background:#c4c4c4;"></div>
<div style="position:absolute;left:15px;top:383px;width:947px;height:1px;background:#e9e9e4;"></div>
<div style="position:absolute;left:30px;top:366px;width:1px;height:17px;background:#e9e9e4;"></div>
<div style="position:absolute;left:73px;top:366px;width:1px;height:17px;background:#e9e9e4;"></div>
<div style="position:absolute;left:265px;top:366px;width:1px;height:17px;background:#e9e9e4;"></div>
<div style="position:absolute;left:335px;top:366px;width:1px;height:17px;background:#e9e9e4;"></div>
<div style="position:absolute;left:418px;top:366px;width:1px;height:17px;background:#e9e9e4;"></div>
<div style="position:absolute;left:515px;top:366px;width:1px;height:17px;background:#e9e9e4;"></div>
<div style="position:absolute;left:534px;top:366px;width:1px;height:17px;background:#e9e9e4;"></div>
<div style="position:absolute;left:599px;top:366px;width:1px;height:17px;background:#e9e9e4;"></div>
<div style="position:absolute;left:664px;top:366px;width:1px;height:17px;background:#e9e9e4;"></div>
<div style="position:absolute;left:739px;top:366px;width:1px;height:17px;background:#e9e9e4;"></div>
<div style="position:absolute;left:804px;top:366px;width:1px;height:17px;background:#e9e9e4;"></div>
<div style="position:absolute;left:857px;top:366px;width:1px;height:17px;background:#e9e9e4;"></div>
<div style="position:absolute;left:912px;top:366px;width:1px;height:17px;background:#e9e9e4;"></div>
<div style="position:absolute;left:14px;top:366px;width:1px;height:18px;background:#c9c9c9;"></div>
<div class="t" style="left:20px;top:367px;font-size:10.5px;font-weight:normal;color:#000;line-height:16px;">1</div>
<div class="t" style="left:30px;width:40px;text-align:right;overflow:hidden;top:367px;font-size:10.5px;font-weight:normal;color:#000;line-height:16px;">6463</div>
<div class="t" style="left:76px;width:189px;overflow:hidden;top:368px;font-size:10px;font-weight:normal;color:#000;line-height:16px;">BATEDEIRA PLANETARIA DELUXE - ARNO</div>
<div class="t" style="left:340px;width:78px;overflow:hidden;top:367px;font-size:10.5px;font-weight:normal;color:#000;line-height:16px;"></div>
<div class="t" style="left:518px;top:368px;font-size:10px;font-weight:normal;color:#000;line-height:16px;">UN</div>
<div class="t" style="left:535px;width:60px;text-align:right;overflow:hidden;top:367px;font-size:10.5px;font-weight:normal;color:#000;line-height:16px;">6,000</div>
<div class="t" style="left:600px;width:60px;text-align:right;overflow:hidden;top:367px;font-size:10.5px;font-weight:normal;color:#000;line-height:16px;">393,25</div>
<div class="t" style="left:665px;width:70px;text-align:right;overflow:hidden;top:367px;font-size:10.5px;font-weight:normal;color:#000;line-height:16px;">2.359,50</div>
<div class="t" style="left:861px;top:367px;font-size:10.5px;font-weight:normal;color:#000;line-height:16px;">07897878</div>
<div style="position:absolute;left:3px;top:384px;width:11px;height:17px;background:linear-gradient(#fbfbfb,#dcdcdc);"></div>
<div style="position:absolute;left:3px;top:401px;width:11px;height:1px;background:#c4c4c4;"></div>
<div style="position:absolute;left:15px;top:401px;width:947px;height:1px;background:#e9e9e4;"></div>
<div style="position:absolute;left:30px;top:384px;width:1px;height:17px;background:#e9e9e4;"></div>
<div style="position:absolute;left:73px;top:384px;width:1px;height:17px;background:#e9e9e4;"></div>
<div style="position:absolute;left:265px;top:384px;width:1px;height:17px;background:#e9e9e4;"></div>
<div style="position:absolute;left:335px;top:384px;width:1px;height:17px;background:#e9e9e4;"></div>
<div style="position:absolute;left:418px;top:384px;width:1px;height:17px;background:#e9e9e4;"></div>
<div style="position:absolute;left:515px;top:384px;width:1px;height:17px;background:#e9e9e4;"></div>
<div style="position:absolute;left:534px;top:384px;width:1px;height:17px;background:#e9e9e4;"></div>
<div style="position:absolute;left:599px;top:384px;width:1px;height:17px;background:#e9e9e4;"></div>
<div style="position:absolute;left:664px;top:384px;width:1px;height:17px;background:#e9e9e4;"></div>
<div style="position:absolute;left:739px;top:384px;width:1px;height:17px;background:#e9e9e4;"></div>
<div style="position:absolute;left:804px;top:384px;width:1px;height:17px;background:#e9e9e4;"></div>
<div style="position:absolute;left:857px;top:384px;width:1px;height:17px;background:#e9e9e4;"></div>
<div style="position:absolute;left:912px;top:384px;width:1px;height:17px;background:#e9e9e4;"></div>
<div style="position:absolute;left:14px;top:384px;width:1px;height:18px;background:#c9c9c9;"></div>
<div class="t" style="left:20px;top:385px;font-size:10.5px;font-weight:normal;color:#000;line-height:16px;">1</div>
<div class="t" style="left:30px;width:40px;text-align:right;overflow:hidden;top:385px;font-size:10.5px;font-weight:normal;color:#000;line-height:16px;">6464</div>
<div class="t" style="left:76px;width:189px;overflow:hidden;top:386px;font-size:10px;font-weight:normal;color:#000;line-height:16px;">BATEDEIRA C/ TIGELA GI RI7725 - BRASTEMP</div>
<div class="t" style="left:340px;width:78px;overflow:hidden;top:385px;font-size:10.5px;font-weight:normal;color:#000;line-height:16px;"></div>
<div class="t" style="left:518px;top:386px;font-size:10px;font-weight:normal;color:#000;line-height:16px;">UN</div>
<div class="t" style="left:535px;width:60px;text-align:right;overflow:hidden;top:385px;font-size:10.5px;font-weight:normal;color:#000;line-height:16px;">11,000</div>
<div class="t" style="left:600px;width:60px;text-align:right;overflow:hidden;top:385px;font-size:10.5px;font-weight:normal;color:#000;line-height:16px;">104,00</div>
<div class="t" style="left:665px;width:70px;text-align:right;overflow:hidden;top:385px;font-size:10.5px;font-weight:normal;color:#000;line-height:16px;">1.144,00</div>
<div class="t" style="left:861px;top:385px;font-size:10.5px;font-weight:normal;color:#000;line-height:16px;">07897878</div>
<div style="position:absolute;left:962px;top:185px;width:17px;height:250px;background:#fff;"></div>
<div style="position:absolute;left:963px;top:186px;width:16px;height:249px;background:#f0f0f0;"></div>
<svg style="position:absolute;left:966px;top:190px" width="10" height="9"><path d="M1.2 6.8 L4.8 3.2 L8.4 6.8" fill="none" stroke="#5a5a5a" stroke-width="2.2"/></svg>
<svg style="position:absolute;left:966px;top:405px" width="10" height="9"><path d="M1.2 2.6 L4.8 6.2 L8.4 2.6" fill="none" stroke="#5a5a5a" stroke-width="2.2"/></svg>
<div style="position:absolute;left:963px;top:288px;width:15px;height:17px;background:#cdcdcd;"></div>
<div style="position:absolute;left:2px;top:418px;width:960px;height:1px;background:#fff;"></div>
<div style="position:absolute;left:2px;top:419px;width:961px;height:16px;background:#f0f0f0;"></div>
<svg style="position:absolute;left:7px;top:422px" width="9" height="10"><path d="M6.6 1.2 L3.0 4.8 L6.6 8.4" fill="none" stroke="#5a5a5a" stroke-width="2.2"/></svg>
<svg style="position:absolute;left:949px;top:422px" width="9" height="10"><path d="M2.4 1.2 L6.0 4.8 L2.4 8.4" fill="none" stroke="#5a5a5a" stroke-width="2.2"/></svg>
<div style="position:absolute;left:20px;top:419px;width:17px;height:15px;background:#cdcdcd;"></div>
<div style="position:absolute;left:1px;top:435px;width:979px;height:1px;background:#fff;"></div>
<div style="position:absolute;left:1px;top:436px;width:979px;height:1px;background:#a6a6ae;"></div>
<div style="position:absolute;left:1px;top:437px;width:979px;height:1px;background:#fff;"></div>
<div class="t" style="left:6px;top:453px;font-size:12.5px;font-weight:bold;color:#000;line-height:16px;letter-spacing:0.1px">Qtde Produtos Selecionados:</div>
<div class="t" style="left:196px;top:453px;font-size:11.5px;font-weight:bold;color:#000;line-height:16px;">171</div>
<div class="t" style="left:422px;top:453px;font-size:12.5px;font-weight:bold;color:#000;line-height:16px;letter-spacing:0.3px">Totais:</div>
<div class="t" style="left:519px;top:453px;font-size:12.5px;font-weight:bold;color:#000;line-height:16px;">4.283,05</div>
<div class="t" style="left:645px;top:453px;font-size:12.5px;font-weight:bold;color:#000;line-height:16px;">201.415,80</div>
<div class="t" style="left:802px;top:453px;font-size:12.5px;font-weight:bold;color:#000;line-height:16px;letter-spacing:0.2px">Peso Total:</div>
<div class="t" style="left:876px;top:453px;font-size:12px;font-weight:bold;color:#000;line-height:16px;">757,291</div>
<div style="position:absolute;left:1px;top:486px;width:980px;height:1px;background:#a0a0a0;"></div>
<div style="position:absolute;left:110px;top:489px;width:1px;height:18px;background:#d7d7d7;"></div>
<div style="position:absolute;left:220px;top:489px;width:1px;height:18px;background:#d7d7d7;"></div>
<div class="t" style="left:225px;top:491px;font-size:11.8px;font-weight:normal;color:#000;line-height:16px;">Click no título da coluna para alterar a ordem de exibição</div>
<div style="position:absolute;left:0px;top:0px;width:1px;height:509px;background:#5b5b5b;"></div>
<div style="position:absolute;left:1px;top:32px;width:1px;height:151px;background:#fff;"></div>
<div style="position:absolute;left:1px;top:183px;width:1px;height:254px;background:#8a8a90;"></div>
<div style="position:absolute;left:2px;top:185px;width:1px;height:250px;background:#fff;"></div>
<div style="position:absolute;left:1px;top:437px;width:1px;height:71px;background:#fff;"></div>
<div style="position:absolute;left:981px;top:0px;width:1px;height:509px;background:#5b5b5b;"></div>
<div style="position:absolute;left:980px;top:32px;width:1px;height:477px;background:#6a6a6a;"></div>
<div style="position:absolute;left:979px;top:32px;width:1px;height:476px;background:#fff;"></div>
<div style="position:absolute;left:0px;top:0px;width:982px;height:1px;background:#5b5b5b;"></div>
<div style="position:absolute;left:0px;top:508px;width:982px;height:1px;background:#5b5b5b;"></div>
<div style="position:absolute;left:979px;top:486px;width:1px;height:1px;background:#a0a0a0;"></div>
<div style="position:absolute;left:979px;top:436px;width:1px;height:1px;background:#a6a6ae;"></div>
<div style="position:absolute;left:971px;top:504px;width:2px;height:2px;background:#b0b0b0;"></div>
<div style="position:absolute;left:974px;top:504px;width:2px;height:2px;background:#b0b0b0;"></div>
<div style="position:absolute;left:977px;top:504px;width:2px;height:2px;background:#b0b0b0;"></div>
<div style="position:absolute;left:974px;top:501px;width:2px;height:2px;background:#b0b0b0;"></div>
<div style="position:absolute;left:977px;top:501px;width:2px;height:2px;background:#b0b0b0;"></div>
<div style="position:absolute;left:977px;top:498px;width:2px;height:2px;background:#b0b0b0;"></div>
</body></html>
